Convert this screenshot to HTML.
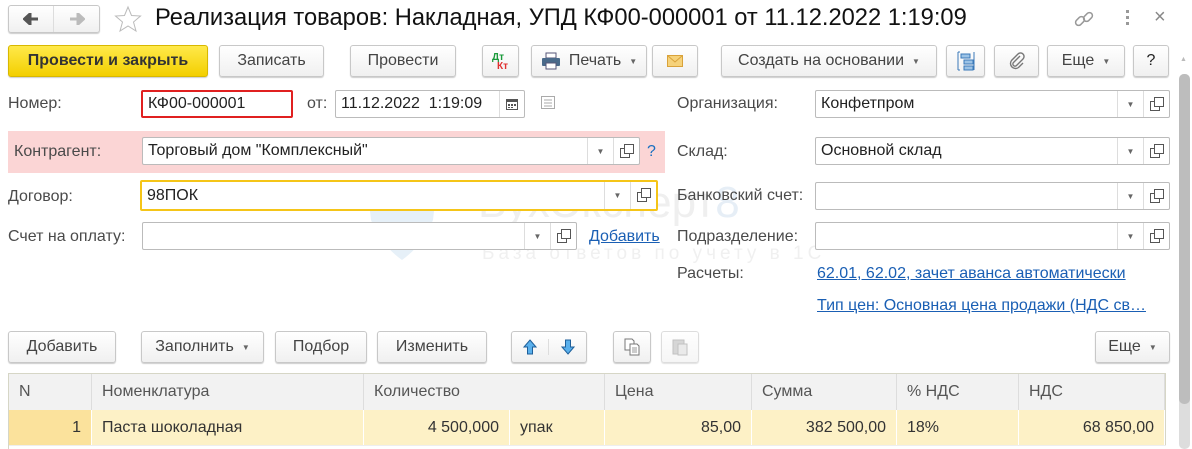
<!DOCTYPE html><html><head><meta charset="utf-8"><style>
*{box-sizing:border-box;margin:0;padding:0}
body{width:1192px;height:449px;overflow:hidden;background:#fff;font-family:"Liberation Sans",Arial,sans-serif;font-size:16px;color:#333;position:relative}
.a{position:absolute}
.btn{position:absolute;border:1px solid #c8c8c8;border-radius:3px;background:linear-gradient(#fff,#f0f0f0);box-shadow:0 1px 1px rgba(0,0,0,.2);display:flex;align-items:center;justify-content:center;color:#444;font-size:16px}
.lbl{position:absolute;color:#4a4a4a;font-size:16px}
.inp{position:absolute;border:1px solid #bbb;border-radius:2px;background:#fff;height:28px;display:flex;align-items:center;padding-left:5px;color:#222;font-size:16px}
.dd{position:absolute;top:0;bottom:0;width:26px;border-left:1px solid #ddd;display:flex;align-items:center;justify-content:center;font-size:8px;color:#666}
.op{position:absolute;top:0;bottom:0;width:26px;border-left:1px solid #ddd;display:flex;align-items:center;justify-content:center}
.op i{display:block;width:10px;height:10px;border:1px solid #555;position:relative;background:#fff;margin:3px 0 0 -3px}
.op i:after{content:"";position:absolute;left:3px;top:-5px;width:8px;height:8px;border:1px solid #555;background:#fff}
.lnk{position:absolute;color:#1a5fb4;text-decoration:underline;font-size:16px}
.caret{font-size:8px;color:#666;margin-left:8px}
.th{position:absolute;top:374px;height:36px;background:#f2f2f2;border-right:1px solid #ddd;display:flex;align-items:center;padding-left:10px;color:#555}
.td{position:absolute;top:410px;height:35px;background:#fdf1c6;border-right:1px solid #fff;display:flex;align-items:center;padding:0 10px;color:#333}
</style></head><body>
<!-- title -->
<div class="btn" style="left:8px;top:5px;width:92px;height:28px;justify-content:flex-start">
<span style="width:46px;height:26px;display:flex;align-items:center;justify-content:center;border-right:1px solid #ddd"><svg width="16" height="12" viewBox="0 0 16 12"><path d="M15 6H5M7 1 1.5 6 7 11Z" stroke="#555" stroke-width="3" fill="#555"/></svg></span><span style="width:46px;display:flex;justify-content:center"><svg width="16" height="12" viewBox="0 0 16 12"><path d="M1 6h10M9 1l5.5 5L9 11Z" stroke="#bbb" stroke-width="3" fill="#bbb"/></svg></span></div>
<svg class="a" style="left:114px;top:5px" width="28" height="28" viewBox="0 0 28 28"><polygon points="14,2 17.5,10.5 26.5,11 19.5,17 22,26 14,21 6,26 8.5,17 1.5,11 10.5,10.5" fill="none" stroke="#bbb" stroke-width="1"/></svg>
<div class="a" style="left:155px;top:5px;font-size:23.7px;color:#111;white-space:nowrap">Реализация товаров: Накладная, УПД КФ00-000001 от 11.12.2022 1:19:09</div>
<svg class="a" style="left:1073px;top:8px" width="22" height="22" viewBox="0 0 22 22"><g fill="none" stroke="#999" stroke-width="1.5"><rect x="2" y="10" width="10" height="6" rx="3" transform="rotate(-45 7 13)"/><rect x="10" y="6" width="10" height="6" rx="3" transform="rotate(-45 15 9)"/></g></svg>
<div class="a" style="left:1126px;top:10px;width:4px"><div style="width:3px;height:3px;background:#999;margin-bottom:3px"></div><div style="width:3px;height:3px;background:#999;margin-bottom:3px"></div><div style="width:3px;height:3px;background:#999"></div></div>
<div class="a" style="left:1154px;top:6px;font-size:20px;color:#888">×</div>
<!-- toolbar -->
<div class="btn" style="left:8px;top:45px;width:200px;height:32px;background:linear-gradient(#ffe94a,#f3cf00);border-color:#d8b800;font-weight:bold;color:#333">Провести и закрыть</div>
<div class="btn" style="left:219px;top:45px;width:105px;height:32px">Записать</div>
<div class="btn" style="left:350px;top:45px;width:106px;height:32px">Провести</div>
<div class="btn" style="left:482px;top:45px;width:37px;height:32px;font-size:10px;font-weight:bold;line-height:9px;display:block;padding:7px 0 0 9px"><span style="color:#1a9a3a">Дт</span><br><span style="color:#e03030;margin-left:5px">Кт</span></div>
<div class="btn" style="left:531px;top:45px;width:116px;height:32px"><svg width="20" height="18" viewBox="0 0 20 18" style="margin-right:8px"><rect x="5" y="1" width="10" height="5" fill="#fff" stroke="#557"/><rect x="1" y="6" width="18" height="8" rx="1" fill="#4a6a8a"/><rect x="5" y="11" width="10" height="6" fill="#fff" stroke="#557"/></svg>Печать<span class="caret">▼</span></div>
<div class="btn" style="left:652px;top:45px;width:46px;height:32px"><svg width="16" height="12"><rect x=".5" y=".5" width="15" height="11" fill="#f6d27a" stroke="#d9a23a"/><path d="M.5 .5 8 7 15.5 .5" fill="none" stroke="#d9a23a"/></svg></div>
<div class="btn" style="left:721px;top:45px;width:216px;height:32px">Создать на основании<span class="caret">▼</span></div>
<div class="btn" style="left:946px;top:45px;width:39px;height:32px"><svg width="20" height="20"><g fill="#9cc3e6" stroke="#3a78b8"><rect x="5" y="3" width="9" height="4"/><rect x="8" y="9" width="9" height="4"/><rect x="8" y="15" width="9" height="4"/></g><path d="M2 1v18M2 1h2M2 19h2M18 1v18" stroke="#3a78b8" fill="none"/></svg></div>
<div class="btn" style="left:994px;top:45px;width:45px;height:32px"><svg width="18" height="18" viewBox="0 0 18 18"><path d="M12 4 5.5 10.5a2 2 0 0 0 3 3L15 7a3.5 3.5 0 0 0-5-5L3.5 8.5a5 5 0 0 0 7 7L15 11" fill="none" stroke="#777" stroke-width="1.4"/></svg></div>
<div class="btn" style="left:1047px;top:45px;width:78px;height:32px">Еще<span class="caret">▼</span></div>
<div class="btn" style="left:1133px;top:45px;width:36px;height:32px;color:#222">?</div>
<!-- scrollbar -->
<div class="a" style="left:1180px;top:56px;font-size:7px;color:#bbb">▲</div>
<div class="a" style="left:1179px;top:74px;width:11px;height:375px;background:#ddd;border-radius:5px"></div>
<div class="a" style="left:1179px;top:74px;width:11px;height:330px;background:#bdbdbd;border-radius:5px"></div>
<!-- watermark -->
<svg class="a" style="left:363px;top:180px" width="78" height="80" viewBox="0 0 78 80"><path d="M4 4 Q39 -4 74 4 L70 40 Q60 65 39 80 Q18 65 8 40Z" fill="#e6f0f8"/></svg>
<div class="a" style="left:478px;top:178px;font-size:44px;color:#efefef;white-space:nowrap">БухЭксперт<span style="color:#e6eef6">8</span></div>
<div class="a" style="left:482px;top:243px;font-size:19px;letter-spacing:4px;color:#f0f0f0;white-space:nowrap">База ответов по учету в 1С</div>
<!-- left form -->
<div class="lbl" style="left:8px;top:95px">Номер:</div>
<div class="inp" style="left:141px;top:90px;width:152px;border:2px solid #e02020">КФ00-000001</div>
<div class="lbl" style="left:307px;top:95px">от:</div>
<div class="inp" style="left:335px;top:90px;width:190px">11.12.2022&nbsp;&nbsp;1:19:09<div class="dd" style="right:0;width:25px"><svg width="12" height="12"><rect x=".5" y="1.5" width="11" height="10" fill="none" stroke="#555"/><rect x="0" y="1" width="12" height="3" fill="#555"/><g fill="#555"><rect x="2" y="6" width="2" height="2"/><rect x="5" y="6" width="2" height="2"/><rect x="8" y="6" width="2" height="2"/><rect x="2" y="9" width="2" height="1"/><rect x="5" y="9" width="2" height="1"/></g></svg></div></div>
<svg class="a" style="left:541px;top:96px" width="16" height="14"><rect x=".5" y=".5" width="13" height="12" fill="none" stroke="#aaa"/><path d="M3 4h8M3 7h8M3 10h8" stroke="#aaa"/></svg>
<div class="a" style="left:8px;top:131px;width:657px;height:42px;background:#fbd5d5"></div>
<div class="lbl" style="left:14px;top:143px">Контрагент:</div>
<div class="inp" style="left:142px;top:137px;width:498px">Торговый дом "Комплексный"<div class="dd" style="right:26px">▼</div><div class="op" style="right:0"><i></i></div></div>
<div class="a" style="left:647px;top:143px;color:#1a6fc0;font-size:16px">?</div>
<div class="lbl" style="left:8px;top:188px">Договор:</div>
<div class="inp" style="left:140px;top:180px;width:518px;height:31px;border:2px solid #f5c518">98ПОК<div class="dd" style="right:26px">▼</div><div class="op" style="right:0"><i></i></div></div>
<div class="lbl" style="left:8px;top:228px">Счет на оплату:</div>
<div class="inp" style="left:142px;top:222px;width:435px"><div class="dd" style="right:26px">▼</div><div class="op" style="right:0"><i></i></div></div>
<div class="lnk" style="left:589px;top:228px">Добавить</div>
<!-- right form -->
<div class="lbl" style="left:677px;top:95px">Организация:</div>
<div class="inp" style="left:815px;top:90px;width:355px">Конфетпром<div class="dd" style="right:26px">▼</div><div class="op" style="right:0"><i></i></div></div>
<div class="lbl" style="left:677px;top:143px">Склад:</div>
<div class="inp" style="left:815px;top:137px;width:355px">Основной склад<div class="dd" style="right:26px">▼</div><div class="op" style="right:0"><i></i></div></div>
<div class="lbl" style="left:677px;top:187px">Банковский счет:</div>
<div class="inp" style="left:815px;top:182px;width:355px"><div class="dd" style="right:26px">▼</div><div class="op" style="right:0"><i></i></div></div>
<div class="lbl" style="left:677px;top:228px">Подразделение:</div>
<div class="inp" style="left:815px;top:222px;width:355px"><div class="dd" style="right:26px">▼</div><div class="op" style="right:0"><i></i></div></div>
<div class="lbl" style="left:677px;top:265px">Расчеты:</div>
<div class="lnk" style="left:817px;top:265px">62.01, 62.02, зачет аванса автоматически</div>
<div class="lnk" style="left:817px;top:297px">Тип цен: Основная цена продажи (НДС св…</div>
<!-- table toolbar -->
<div class="btn" style="left:8px;top:331px;width:108px;height:32px">Добавить</div>
<div class="btn" style="left:141px;top:331px;width:123px;height:32px">Заполнить<span class="caret">▼</span></div>
<div class="btn" style="left:275px;top:331px;width:92px;height:32px">Подбор</div>
<div class="btn" style="left:377px;top:331px;width:110px;height:32px">Изменить</div>
<div class="btn" style="left:511px;top:331px;width:76px;height:32px;justify-content:flex-start"><span style="width:37px;display:flex;justify-content:center;border-right:1px solid #ddd"><svg width="14" height="16"><path d="M7 1 13 8H9.5v7h-5V8H1Z" fill="#5ab0ec" stroke="#1e5f9a"/></svg></span><span style="width:37px;display:flex;justify-content:center"><svg width="14" height="16"><path d="M7 15 13 8H9.5V1h-5v7H1Z" fill="#5ab0ec" stroke="#1e5f9a"/></svg></span></div>
<div class="btn" style="left:613px;top:331px;width:38px;height:32px"><svg width="16" height="18"><g fill="#fff" stroke="#777"><path d="M1 1h7l2 2v9H1z"/><path d="M6 6h7l2 2v9H6z"/></g><path d="M8 10h5M8 12h5M8 14h5" stroke="#999"/></svg></div>
<div class="btn" style="left:661px;top:331px;width:38px;height:32px;opacity:.6"><svg width="16" height="18"><rect x="1" y="2" width="11" height="14" fill="#bbb" stroke="#999"/><rect x="6" y="6" width="9" height="11" fill="#ddd" stroke="#999"/></svg></div>
<div class="btn" style="left:1095px;top:331px;width:75px;height:32px">Еще<span class="caret">▼</span></div>
<!-- table -->
<div class="a" style="left:8px;top:373px;width:1158px;height:76px;border:1px solid #d6d6c6;border-bottom:none"></div>
<div class="th" style="left:9px;width:83px">N</div>
<div class="th" style="left:92px;width:272px">Номенклатура</div>
<div class="th" style="left:364px;width:241px">Количество</div>
<div class="th" style="left:605px;width:147px">Цена</div>
<div class="th" style="left:752px;width:145px">Сумма</div>
<div class="th" style="left:897px;width:122px">% НДС</div>
<div class="th" style="left:1019px;width:146px">НДС</div>
<div class="td" style="left:9px;width:83px;background:#fbe29c;justify-content:flex-end">1</div>
<div class="td" style="left:92px;width:272px">Паста шоколадная</div>
<div class="td" style="left:364px;width:146px;justify-content:flex-end">4 500,000</div>
<div class="td" style="left:510px;width:95px">упак</div>
<div class="td" style="left:605px;width:147px;justify-content:flex-end">85,00</div>
<div class="td" style="left:752px;width:145px;justify-content:flex-end">382 500,00</div>
<div class="td" style="left:897px;width:122px">18%</div>
<div class="td" style="left:1019px;width:146px;justify-content:flex-end">68 850,00</div>
<div class="a" style="left:9px;top:445px;width:1157px;height:4px;background:#fff;border-top:1px solid #eee"></div>
</body></html>
